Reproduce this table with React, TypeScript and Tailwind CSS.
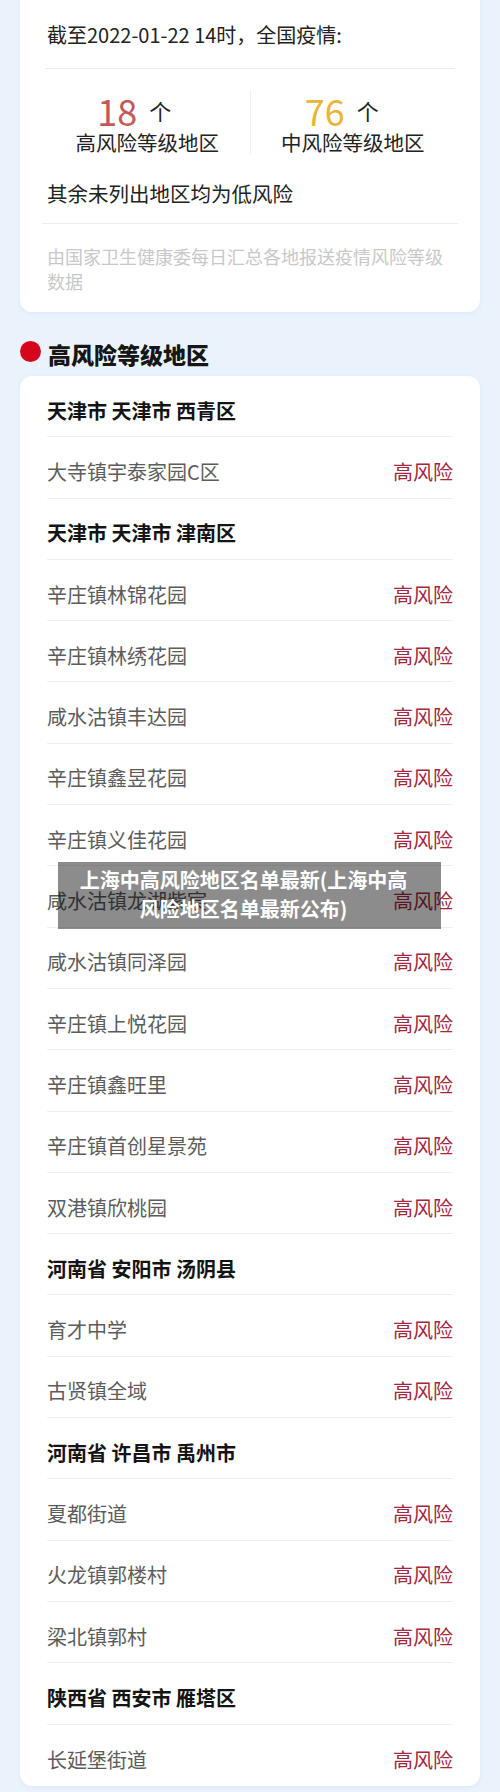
import React from "react";

type Row = { text: string; header?: boolean };

const rows: Row[] = [
  { text: "天津市 天津市 西青区", header: true },
  { text: "大寺镇宇泰家园C区" },
  { text: "天津市 天津市 津南区", header: true },
  { text: "辛庄镇林锦花园" },
  { text: "辛庄镇林绣花园" },
  { text: "咸水沽镇丰达园" },
  { text: "辛庄镇鑫昱花园" },
  { text: "辛庄镇义佳花园" },
  { text: "咸水沽镇龙湖紫宸" },
  { text: "咸水沽镇同泽园" },
  { text: "辛庄镇上悦花园" },
  { text: "辛庄镇鑫旺里" },
  { text: "辛庄镇首创星景苑" },
  { text: "双港镇欣桃园" },
  { text: "河南省 安阳市 汤阴县", header: true },
  { text: "育才中学" },
  { text: "古贤镇全域" },
  { text: "河南省 许昌市 禹州市", header: true },
  { text: "夏都街道" },
  { text: "火龙镇郭楼村" },
  { text: "梁北镇郭村" },
  { text: "陕西省 西安市 雁塔区", header: true },
  { text: "长延堡街道" },
];

export default function App() {
  return (
    <div
      className="relative w-[500px] min-h-[1792px] bg-[#eaf3fc] px-[20px] overflow-hidden"
      style={{ fontFamily: '"Noto Sans CJK SC", "Noto Sans", sans-serif' }}
    >
      {/* Summary card */}
      <div className="bg-white rounded-b-[12px] shadow-[0_1px_4px_rgba(120,150,190,0.12)] pt-[20px] pb-[18px]">
        <div className="px-[27px] h-[30px] leading-[30px] text-[20px] text-[#222]">
          截至2022-01-22 14时，全国疫情:
        </div>
        <div className="mx-[25px] mt-[18px] h-px bg-[#ececec]" />
        <div className="mx-[25px] flex pt-[21px]">
          <div className="flex-1 flex flex-col items-center">
            <div className="flex items-center h-[40px] mr-[26px]">
              <span className="text-[36px] leading-[40px] text-[#c55a55]">18</span>
              <span className="ml-[12px] text-[22px] leading-[40px] text-[#222]">个</span>
            </div>
            <div className="text-[20.5px] leading-[24px] text-[#222]">高风险等级地区</div>
          </div>
          <div className="w-px bg-[#efefef]" />
          <div className="flex-1 flex flex-col items-center">
            <div className="flex items-center h-[40px] mr-[22px]">
              <span className="text-[36px] leading-[40px] text-[#e8b53a]">76</span>
              <span className="ml-[12px] text-[22px] leading-[40px] text-[#222]">个</span>
            </div>
            <div className="text-[20.5px] leading-[24px] text-[#222]">中风险等级地区</div>
          </div>
        </div>
        <div className="px-[27px] mt-[24px] h-[30px] leading-[30px] text-[20.5px] text-[#222]">
          其余未列出地区均为低风险
        </div>
        <div className="mx-[22px] mt-[15px] h-px bg-[#ececec]" />
        <div className="px-[27px] mt-[20px] text-[18px] leading-[25px] text-[#c8c8c8]">
          由国家卫生健康委每日汇总各地报送疫情风险等级数据
        </div>
      </div>

      {/* Section heading */}
      <div className="mt-[26px] flex items-center h-[32px]">
        <div className="w-[21px] h-[21px] rounded-full bg-[#d6061d] mb-[5px]" />
        <div className="ml-[7px] text-[23px] leading-[32px] font-black text-[#161616]">
          高风险等级地区
        </div>
      </div>

      {/* List card */}
      <div className="mt-[6px] bg-white rounded-[12px] shadow-[0_1px_4px_rgba(120,150,190,0.12)]">
        <div className="mx-[27px]">
          {rows.map((r, i) => (
            <div
              key={i}
              className={
                "h-[61.3px] pt-[9px] flex items-center justify-between " +
                (i < rows.length - 1 ? "border-b border-[#efefef]" : "")
              }
            >
              {r.header ? (
                <span className="text-[20px] font-bold text-[#141414] whitespace-pre">
                  {r.text}
                </span>
              ) : (
                <>
                  <span className="text-[20px] text-[#5c5c5c]">{r.text}</span>
                  <span className="text-[20px] text-[#a3283f]">高风险</span>
                </>
              )}
            </div>
          ))}
        </div>
      </div>

      {/* Overlay caption */}
      <div className="absolute left-[58px] top-[862px] w-[383px] h-[67px] bg-[rgba(0,0,0,0.45)] pl-[4px] pr-[16px] pt-[3px]">
        <div className="text-center text-white font-bold text-[20px] leading-[29px] whitespace-nowrap">
          上海中高风险地区名单最新(上海中高
          <br />
          风险地区名单最新公布)
        </div>
      </div>
    </div>
  );
}
